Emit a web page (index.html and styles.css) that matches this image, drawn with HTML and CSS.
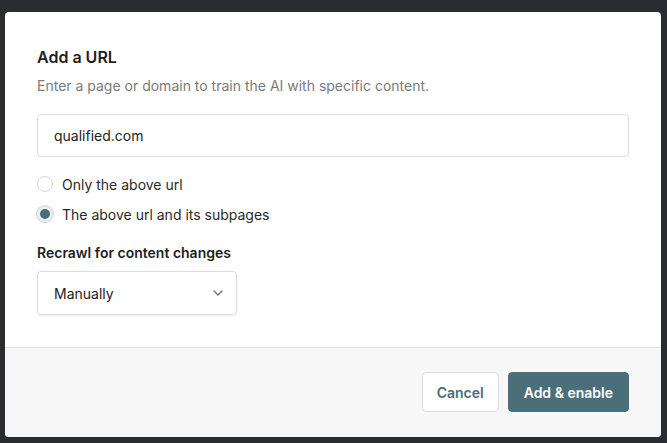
FILE: index.html
```html
<!DOCTYPE html>
<html lang="en">
<head>
  <meta charset="UTF-8">
  <meta name="viewport" content="width=device-width, initial-scale=1.0">
  <title>Add a URL</title>
  <link rel="stylesheet" href="styles.css">
</head>
<body>
  <div class="modal">
    <div class="modal-body">
      <h2 class="modal-title">Add a URL</h2>
      <p class="modal-hint">Enter a page or domain to train the AI with specific content.</p>

      <input class="url-input" type="text" value="qualified.com">

      <label class="radio-row">
        <input type="radio" name="scope">
        <span class="radio-dot"></span>
        Only the above url
      </label>
      <label class="radio-row">
        <input type="radio" name="scope" checked>
        <span class="radio-dot"></span>
        The above url and its subpages
      </label>

      <div class="field-label">Recrawl for content changes</div>
      <div class="select">
        <span>Manually</span>
        <svg width="12" height="8" viewBox="0 0 12 8"><path d="M2 2l4 4 4-4" fill="none" stroke="#777" stroke-width="1.5" stroke-linecap="round" stroke-linejoin="round"/></svg>
      </div>
    </div>

    <div class="modal-footer">
      <button class="btn btn-cancel">Cancel</button>
      <button class="btn btn-primary">Add &amp; enable</button>
    </div>
  </div>
</body>
</html>
```

FILE: styles.css
```css
body {
  margin: 0;
  padding: 12px 6px 7px 5px;
  background-color: #2a2c31;
  font-family: Inter, "Noto Sans", sans-serif;
  color: #222;
}

.modal {
  background-color: #fff;
  border-radius: 4px;
  overflow: hidden;
}

.modal-body {
  padding: 35px 32px 32px 32px;
}

.modal-title {
  margin: 0;
  font-size: 16px;
  font-weight: 600;
  line-height: 20px;
  color: #1e1e1e;
}

.modal-hint {
  margin: 9px 0 18px;
  font-size: 14px;
  line-height: 20px;
  color: #7b7b7b;
}

.url-input {
  display: block;
  box-sizing: border-box;
  width: 100%;
  height: 43px;
  padding: 0 16px;
  font-family: inherit;
  font-size: 14px;
  color: #222;
  border: 1px solid #dcdcdc;
  border-radius: 4px;
  outline: none;
  margin-bottom: 12px;
}

.radio-row {
  display: flex;
  align-items: center;
  gap: 9px;
  height: 30px;
  font-size: 14px;
  color: #2a2a2a;
}

.radio-row input {
  display: none;
}

.radio-dot {
  box-sizing: border-box;
  width: 16px;
  height: 16px;
  border: 1px solid #d4d4d4;
  border-radius: 50%;
  background: #fff;
}

.radio-row input:checked + .radio-dot {
  border: 3px solid #e9eef0;
  background: #4a6e78;
  box-shadow: 0 0 0 1px #d4d4d4;
}

.field-label {
  margin-top: 14px;
  font-size: 14px;
  font-weight: 600;
  line-height: 20px;
  color: #1e1e1e;
}

.select {
  box-sizing: border-box;
  width: 200px;
  height: 44px;
  margin-top: 8px;
  padding: 0 12px 0 16px;
  display: flex;
  align-items: center;
  justify-content: space-between;
  border: 1px solid #dcdcdc;
  border-radius: 4px;
  box-shadow: 0 1px 2px rgba(0, 0, 0, 0.08);
  font-size: 14px;
  color: #222;
}

.modal-footer {
  display: flex;
  justify-content: flex-end;
  gap: 9px;
  padding: 24px 32px 25px;
  background-color: #f7f7f7;
  border-top: 1px solid #e3e3e3;
}

.btn {
  height: 40px;
  padding: 0 15px;
  font-family: inherit;
  font-size: 14px;
  font-weight: 600;
  border-radius: 4px;
  cursor: pointer;
}

.btn-cancel {
  padding: 0 14px;
  background-color: #fff;
  color: #4a6e78;
  border: 1px solid #dcdcdc;
}

.btn-primary {
  background-color: #4b6f78;
  color: #fff;
  border: 1px solid #4b6f78;
}
```
